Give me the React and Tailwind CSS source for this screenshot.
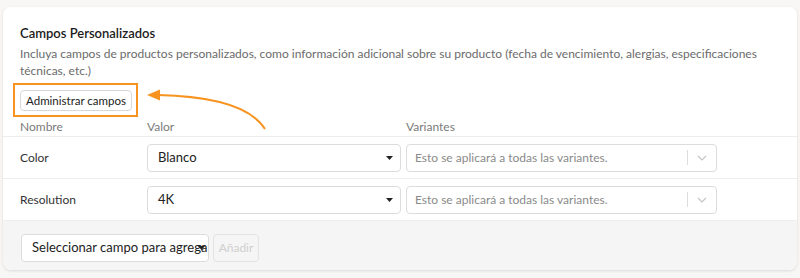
import React from "react"

const font = { fontFamily: "Lato, 'Noto Sans', sans-serif" }

function Caret() {
  return (
    <svg width="7" height="4" viewBox="0 0 7 4" className="shrink-0">
      <path d="M0 0 L7 0 L3.5 4 Z" fill="#222" />
    </svg>
  )
}

function ValueSelect({ value }) {
  return (
    <div className="flex h-[28px] w-[254px] items-center justify-between rounded-[4px] border border-[#dcdcdc] bg-white pl-[10px] pr-[7px] text-[13px] text-[#222]">
      <span>{value}</span>
      <Caret />
    </div>
  )
}

function VariantSelect() {
  return (
    <div className="flex h-[28px] w-[311px] items-center rounded-[4px] border border-[#dcdcdc] bg-white pl-[8px] text-[12px] text-[#8a8a8a]">
      <span className="flex-1">Esto se aplicará a todas las variantes.</span>
      <div className="h-[15px] w-px bg-[#dddddd]" />
      <div className="flex w-[28px] justify-center">
        <svg width="10" height="6" viewBox="0 0 10 6" fill="none">
          <path d="M1 1 L5 5 L9 1" stroke="#c4c4c4" strokeWidth="1.2" />
        </svg>
      </div>
    </div>
  )
}

const rows = [
  { name: "Color", value: "Blanco" },
  { name: "Resolution", value: "4K" },
]

export default function App() {
  return (
    <div className="relative h-[278px] w-[800px] overflow-hidden bg-[#f8f7f5] px-[3px] pt-[7px]" style={font}>
      <div className="relative w-[794px] overflow-hidden rounded-[8px] bg-white shadow-[0_1px_3px_rgba(0,0,0,0.12)]">
        <div className="px-[17px] pt-[17px]">
          <h2 className="text-[13px] leading-[18px] font-semibold text-[#1c1c1c]">Campos Personalizados</h2>
          <p className="mt-[3px] text-[12px] leading-[17px] text-[#6b6b6b]">
            Incluya campos de productos personalizados, como información adicional sobre su producto (fecha de vencimiento, alergias, especificaciones técnicas, etc.)
          </p>
          <button className="mt-[11px] flex h-[21px] w-[112px] items-center justify-center rounded-[4px] border border-[#d8d8d8] bg-white text-[11.5px] text-[#222]">
            Administrar campos
          </button>
        </div>

        {/* table */}
        <div className="grid h-[25px] grid-cols-[127px_259px_1fr] items-end px-[17px] pb-[2px] text-[12px] leading-[14px] text-[#7a7a7a]">
          <span>Nombre</span>
          <span>Valor</span>
          <span>Variantes</span>
        </div>
        {rows.map((r) => (
          <div key={r.name} className="grid h-[42px] grid-cols-[127px_259px_1fr] items-center border-t border-[#ededed] px-[17px]">
            <span className="text-[12px] text-[#333]">{r.name}</span>
            <ValueSelect value={r.value} />
            <VariantSelect />
          </div>
        ))}

        <div className="flex h-[50px] items-start gap-[4px] border-t border-[#ededed] bg-[#f5f5f5] px-[18px] pt-[13px]">
          <div className="relative flex h-[28px] w-[188px] items-center overflow-hidden rounded-[4px] border border-[#dcdcdc] bg-white pl-[10px] text-[13px] text-[#222]">
            <span className="overflow-hidden whitespace-nowrap">Seleccionar campo para agregar</span>
            <span className="absolute right-[3px] top-[11px]"><Caret /></span>
          </div>
          <button disabled className="h-[28px] w-[46px] rounded-[4px] border border-[#e3e3e3] text-[12px] text-[#cfcfcf]">
            Añadir
          </button>
        </div>
      </div>

      {/* annotation */}
      <div className="pointer-events-none absolute left-[13px] top-[83px] h-[34px] w-[125px] border-2 border-[#f7931e]" />
      <svg className="pointer-events-none absolute left-0 top-0" width="800" height="278">
        <path d="M265 129 Q 245 97 158 95" fill="none" stroke="#f7931e" strokeWidth="2" />
        <path d="M147 95 L160 89.5 L160 100.5 Z" fill="#f7931e" />
      </svg>
    </div>
  )
}
